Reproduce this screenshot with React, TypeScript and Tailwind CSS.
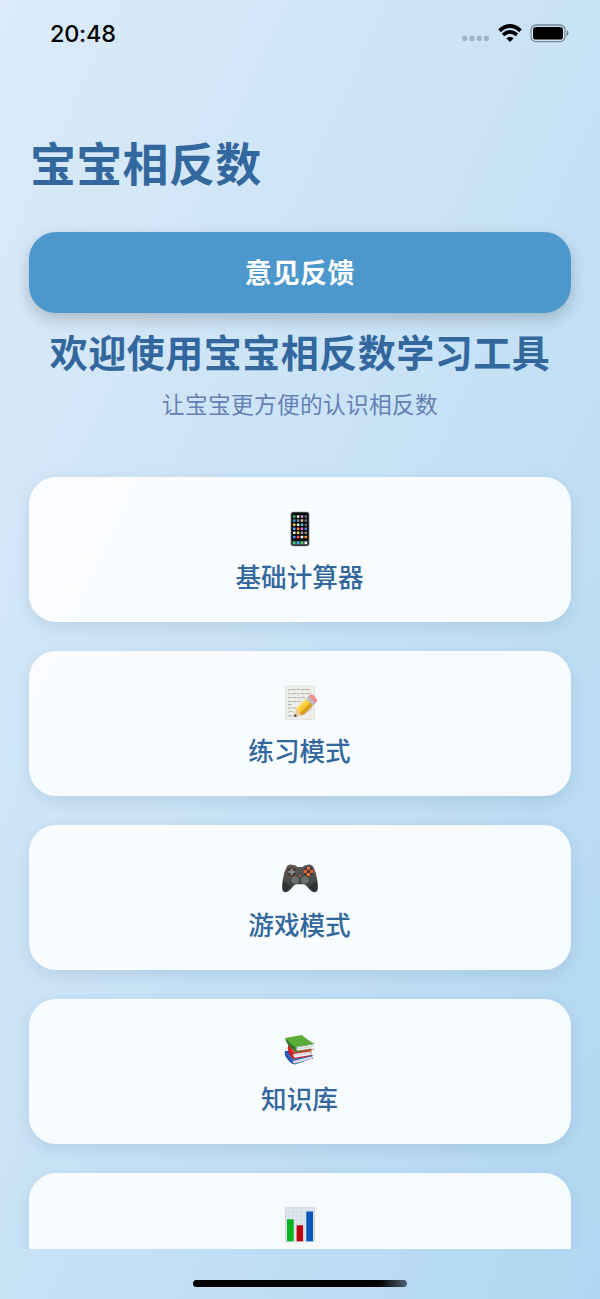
import React from 'react';

function PhoneIcon() {
  const colors = [
    '#35d05a', '#f4f4f4', '#dd8ef0', '#6a6e78',
    '#3ba4f4', '#8794a8', '#f0c9a4', '#777b84',
    '#ffc83d', '#f5f5f5', '#39c6e8', '#66696f',
    '#41b6ff', '#ff8a30', '#f46adf', '#4f8df0',
    '#ffffff', '#f6dc4c', '#9a9da3', '#868b92',
    '#4098ff', '#ff5148', '#ffffff', '#ff9838',
  ];
  return (
    <svg width="50" height="40" viewBox="0 0 50 40">
      <rect x="15.6" y="2.8" width="18.8" height="34.4" rx="2.6" fill="#777b80" />
      <rect x="16.4" y="3.4" width="17.2" height="33.2" rx="2" fill="#08090b" />
      {colors.map((c, i) => (
        <rect key={i} x={18 + (i % 4) * 3.85} y={6.2 + Math.floor(i / 4) * 4.1} width="2.5" height="2.5" rx="0.5" fill={c} />
      ))}
      <rect x="17" y="31.7" width="16" height="4.4" rx="0.8" fill="#3e4a4d" />
      {['#35d25f', '#3ba9fb', '#43d05e', '#f5f5f5'].map((c, i) => (
        <rect key={c} x={18 + i * 3.85} y="32.6" width="2.5" height="2.5" rx="0.5" fill={c} />
      ))}
    </svg>
  );
}

function MemoIcon() {
  return (
    <svg width="50" height="40" viewBox="0 0 50 40">
      <defs>
        <linearGradient id="pencil" x1="0" y1="0" x2="0" y2="1">
          <stop offset="0" stopColor="#ffe072" />
          <stop offset="0.5" stopColor="#fbc82d" />
          <stop offset="1" stopColor="#d18d17" />
        </linearGradient>
      </defs>
      <rect x="10" y="2.5" width="30" height="34.5" fill="#dddfdc" />
      <rect x="10.8" y="3" width="28.5" height="33.3" fill="#eeeeea" />
      <g fill="none" stroke="#a0a19e" strokeWidth="0.9" strokeDasharray="2.8 0.6 1.2 0.5 3.5 0.8">
        <path d="M13 7.3l2-1 1 1 2-1 3 .6 2-.8 3 .9 4-.6 5 .3" />
        <path d="M13 11.2l2-.8 2 .8 3-1 3 1 4-.9 3 .7 5-.8" />
        <path d="M13 15l3-.8 2 .6 3-.6 4 .8 2-.8 3 .5" />
        <path d="M13 18.8l2-.5 3 .5 3-.6 3 .6 3-.8" />
        <path d="M13 21.6l4-.2M13 25.3l4-.6 2 .5 2-.5" />
        <path d="M13 29.2l3-.8 3 .8M13 33.2l3-.7 3 .5" />
      </g>
      <path d="M19.5 33.8l10-2 7-5 1-4-8 5z" fill="#777" opacity="0.22" />
      <g transform="translate(19 34) rotate(-44)">
        <path d="M0 0L8-4.9v9.8z" fill="#edc99a" />
        <path d="M0 0l2.8-1.6v3.2z" fill="#333" />
        <path d="M8-4.9h13.5v9.8H8L6.6 2.6 7.5 0l-.8-2.6z" fill="url(#pencil)" />
        <path d="M7.2 2H21.5" stroke="#bd7e12" strokeWidth="0.6" />
        <rect x="21.5" y="-4.9" width="3.3" height="9.8" fill="#a7adb3" />
        <path d="M22.5-4.9v9.8M23.8-4.9v9.8" stroke="#dfe3e5" strokeWidth="0.5" />
        <path d="M24.8-4.9h2q2.4 0 2.4 4.9t-2.4 4.9h-2z" fill="#ee8f91" />
      </g>
    </svg>
  );
}

function GamepadIcon() {
  return (
    <svg width="50" height="40" viewBox="0 0 50 40">
      <defs>
        <linearGradient id="pad" x1="0" y1="0" x2="0" y2="1">
          <stop offset="0" stopColor="#5b5d5c" />
          <stop offset="0.6" stopColor="#484a49" />
          <stop offset="1" stopColor="#3b3d3c" />
        </linearGradient>
      </defs>
      <g transform="translate(0 2.3) scale(1 0.98)">
        <path d="M11.5 8.2q1.2-3.4 4.5-2.8l4.5 1 2 1.5h5l2-1.5 4.5-1q3.3-.6 4.5 2.8 2.5 5 3.7 12.5 1.3 8 .3 10.5-1.1 3.3-4.3 2.2-2.9-1.2-6.7-6.1-1.2-1.5-3-1.8h-7q-1.8.3-3 1.8-3.8 4.9-6.7 6.1-3.2 1.1-4.3-2.2-1-2.5.3-10.5Q9 13.2 11.5 8.2z" fill="url(#pad)" />
        <path d="M8.7 22q-1.4 7.5-.4 9.6 1.2 1.6 2.9.8 2.1-1.2 4.6-4.4M41.3 22q1.4 7.5.4 9.6-1.2 1.6-2.9.8-2.1-1.2-4.6-4.4" fill="#303231" />
        <circle cx="16.8" cy="12.8" r="4.9" fill="#373a39" stroke="#8a4c38" strokeWidth="0.7" />
        <path d="M15.7 9.3h2.2v2.4h2.4v2.2h-2.4v2.4h-2.2v-2.4h-2.4v-2.2h2.4z" fill="#858987" />
        <circle cx="33.5" cy="12.6" r="5" fill="#3b3433" />
        <circle cx="33.4" cy="9.3" r="1.8" fill="#f37242" />
        <circle cx="36.8" cy="12.4" r="1.8" fill="#ef6938" />
        <circle cx="33.4" cy="15.6" r="1.8" fill="#ff7a39" />
        <circle cx="30.3" cy="12.4" r="1.8" fill="#ed6838" />
        <g fill="#565d5b" stroke="#8d9390" strokeWidth="0.8">
          <circle cx="20.3" cy="21.3" r="3.1" />
          <circle cx="30" cy="21.3" r="3.1" />
        </g>
        <circle cx="20.3" cy="21.3" r="1.7" fill="#717876" />
        <circle cx="30" cy="21.3" r="1.7" fill="#717876" />
        <path d="M24 17h2.2M25 16.3v1.8" stroke="#d76435" strokeWidth="0.8" />
      </g>
    </svg>
  );
}

function BooksIcon() {
  return (
    <svg width="50" height="40" viewBox="0 0 50 40">
      <g transform="translate(0 -1.6)">
        <path d="M10 21.5l24-1 4 8.5-18.5 6q-3-.2-8-6.5-2.6-4-1.5-7z" fill="#2450ad" />
        <path d="M17.5 31.3l19.2-4.4.6 2.4-17.9 4.8q-1.8-.8-1.9-2.8z" fill="#e5e8e9" />
        <path d="M18 32.6l19-4.4" stroke="#a8adb1" strokeWidth="0.4" />
        <path d="M10 21.5q3 6 8 10l19.8-4.8-.4-1.4L17 28z" fill="#3974cf" />
        <path d="M13.5 14.2l17-1.2 6 6.5-.5 7-17 3.1q-2.5-.5-5.5-6.5-1.4-5.2 0-8.9z" fill="#ce2027" />
        <path d="M18.3 24.5l17.4-2.5.3 3.5-16.4 2.8q-1.7-.8-1.3-3.8z" fill="#eceded" />
        <path d="M18.8 26.1l17-2.5" stroke="#b7b9ba" strokeWidth="0.5" />
        <path d="M13.2 14.5l4.8 9.2 18.3-2-.7-4-17 2z" fill="#ef4545" />
        <path d="M10.2 8.6L27 5.5q2.5 2.5 11.8 8.7L20 18q-5.3-2.7-9.8-9.4z" fill="#5cad3a" />
        <path d="M10.2 8.6q.1 5.6 9.8 13.3l.2-4.1Q14.7 14 10.2 8.6z" fill="#28772d" />
        <path d="M21 17.4l17.3-2.6q1.1 2.5-.2 4L22 21.4q-1.5-1-.9-4z" fill="#eff1ed" />
        <path d="M22 19.4l15.9-2.5" stroke="#a9b0a7" strokeWidth="0.5" />
        <path d="M20 17.8l18.8-3.8 1 .7-18 3.2q-1.2 2.2.3 3.8l17-2.4.3.6-18.1 3h-1.3q-1.6-1.6 0-5.1z" fill="#358c31" />
      </g>
    </svg>
  );
}

function ChartIcon() {
  return (
    <svg width="50" height="40" viewBox="0 0 50 40">
      <rect x="10" y="2.2" width="30" height="34.8" fill="#d0d7e0" />
      <rect x="11.2" y="3.2" width="27.6" height="33" fill="#e0e8f0" />
      <path d="M14 3.2v33M18 3.2v33M22 3.2v33M26 3.2v33M30 3.2v33M34 3.2v33M11.2 7h27.6M11.2 11h27.6M11.2 15h27.6M11.2 19h27.6M11.2 23h27.6M11.2 27h27.6M11.2 31h27.6" stroke="#cfdae6" strokeWidth="0.5" />
      <rect x="12" y="14.3" width="6.7" height="22" fill="#05b51b" />
      <rect x="21.6" y="20.3" width="6.5" height="16" fill="#bd0710" />
      <rect x="31.3" y="6.5" width="6.7" height="29.8" fill="#0757bc" />
    </svg>
  );
}

const menu = [
  { id: 'calc', label: '基础计算器', icon: <PhoneIcon /> },
  { id: 'practice', label: '练习模式', icon: <MemoIcon /> },
  { id: 'game', label: '游戏模式', icon: <GamepadIcon /> },
  { id: 'library', label: '知识库', icon: <BooksIcon /> },
  { id: 'stats', label: '', icon: <ChartIcon /> },
];

function StatusBar() {
  return (
    <div className="flex h-[66px] shrink-0 items-center justify-between pl-[50px] pr-[31px]">
      <span className="pt-px font-['Inter'] text-[23.4px] font-medium leading-none tracking-[-0.2px] text-black">20:48</span>
      <div className="flex items-center">
        <svg width="28" height="20" viewBox="0 0 28 20" className="mt-3">
          {[2.8, 10, 17.2, 24.4].map(x => (
            <circle key={x} cx={x} cy="9.4" r="2.6" fill="#000" opacity="0.22" />
          ))}
        </svg>
        <svg width="24" height="19" viewBox="0 0 24 19" className="ml-2">
          <path d="M1.5 6.7Q12-2.7 22.5 6.7" fill="none" stroke="#000" strokeWidth="3.9" />
          <path d="M5 10.9q7-6 14 0" fill="none" stroke="#000" strokeWidth="3.5" />
          <path d="M8.4 14.3q3.6-3.1 7.2 0L12 18z" fill="#000" />
        </svg>
        <svg width="39" height="19" viewBox="0 0 39 19" className="ml-2">
          <rect x="1" y="1" width="34" height="16.6" rx="5" fill="none" stroke="#000" strokeOpacity="0.4" strokeWidth="1.3" />
          <rect x="3" y="3" width="30" height="12.6" rx="3.2" fill="#000" />
          <path d="M36.7 6.3q1.8.8 1.8 3t-1.8 3z" fill="#000" opacity="0.45" />
        </svg>
      </div>
    </div>
  );
}

export default function App() {
  return (
    <div className="flex h-[1299px] w-[600px] flex-col overflow-hidden bg-linear-to-br from-[#dbebf9] via-[#c8e2f6] to-[#b0d7f2] font-['Noto_Sans_CJK_SC',sans-serif] text-[#32689d]">
      <StatusBar />

      <h1 className="mt-[60px] mb-[3px] h-[70px] shrink-0 pl-[30px] text-[46px] font-bold leading-[70px] tracking-[0.3px]">宝宝相反数</h1>

      <div className="flex min-h-0 flex-1 flex-col overflow-hidden px-[29px] pt-[33px]">
        <button className="h-[81px] shrink-0 rounded-[27px] bg-[#4c97cc] text-[27px] font-bold tracking-[0.6px] text-white shadow-[0_6px_16px_rgba(0,0,0,0.2)]">
          意见反馈
        </button>

        <div className="flex h-[164px] shrink-0 flex-col items-center whitespace-nowrap pt-[13px]">
          <h2 className="text-[38px] font-bold leading-[50px] tracking-[0.5px]">欢迎使用宝宝相反数学习工具</h2>
          <p className="mt-[11px] text-[22.7px] leading-[34px] tracking-[0.3px] text-[#6580b5]">让宝宝更方便的认识相反数</p>
        </div>

        <div className="flex flex-col gap-[29px]">
          {menu.map(item => (
            <button
              key={item.id}
              className="flex h-[145px] shrink-0 flex-col items-center rounded-[27px] bg-white/88 pt-8 shadow-[0_5px_16px_rgba(0,50,90,0.1)]"
            >
              {item.icon}
              {item.label && <span className="mt-[9px] mr-px text-[25.6px] font-medium leading-9">{item.label}</span>}
            </button>
          ))}
        </div>
      </div>

      {/* Home indicator */}
      <div className="flex h-[50px] shrink-0 justify-center pt-[31px]">
        <div className="h-[7px] w-[214px] rounded-full bg-linear-to-r from-black from-83% to-[#526474]" />
      </div>
    </div>
  );
}
